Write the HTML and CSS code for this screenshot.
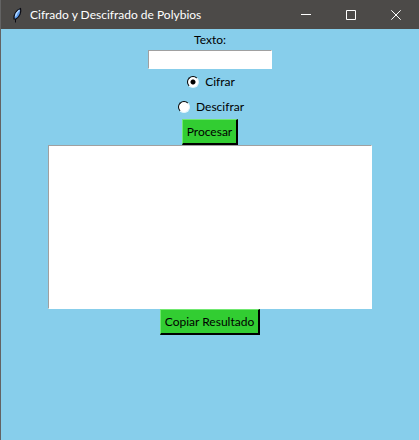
FILE: index.html
```html
<!DOCTYPE html>
<html lang="es">
<head>
<meta charset="utf-8">
<title>Cifrado y Descifrado de Polybios</title>
<link rel="stylesheet" href="styles.css">
</head>
<body>
<div class="window">
  <header class="titlebar">
    <svg class="app-icon" viewBox="0 0 16 16" aria-hidden="true">
      <path d="M5 12C4.500 8 7 3 11.500 1.500C12.500 5 11 9.500 7 12Z" fill="#5b9bea" stroke="#0b0b12" stroke-width="1.200"/>
      <path d="M6.500 9.500C7 6.500 8.500 4.500 10.500 3" fill="none" stroke="#b4d6ff" stroke-width="1.500"/>
      <path d="M6.500 15.500V12" fill="none" stroke="#0b0b12"/>
    </svg>
    <h1 class="title">Cifrado y Descifrado de Polybios</h1>
    <div class="caption-buttons">
      <button class="caption" type="button" aria-label="Minimizar"><svg viewBox="0 0 10 10"><path d="M0 4.500H10"/></svg></button>
      <button class="caption" type="button" aria-label="Maximizar"><svg viewBox="0 0 10 10"><path d="M.5.5H9.500V9.500H.5Z"/></svg></button>
      <button class="caption" type="button" aria-label="Cerrar"><svg viewBox="0 0 10 10"><path d="M.3.3L9.700 9.700M9.700.3L.3 9.700"/></svg></button>
    </div>
  </header>
  <form class="content">
    <label class="label" for="texto">Texto:</label>
    <input class="entry" id="texto" type="text">
    <label class="option"><input type="radio" name="modo" checked>Cifrar</label>
    <label class="option"><input type="radio" name="modo">Descifrar</label>
    <button class="action" type="button">Procesar</button>
    <textarea class="result" aria-label="Resultado"></textarea>
    <button class="action" type="button">Copiar Resultado</button>
  </form>
</div>
</body>
</html>
```
FILE: styles.css
```css
* {
  box-sizing: border-box;
}

body {
  margin: 0;
  font-family: Lato, "Open Sans", sans-serif;
  font-size: 12px;
  color: #000;
}

button,
input,
textarea {
  font: inherit;
  margin: 0;
}

.window {
  display: flex;
  flex-direction: column;
  min-height: 100vh;
  border-left: 1px solid #636363;
  background: #87ceeb;
}

.titlebar {
  display: flex;
  align-items: center;
  height: 29px;
  padding-left: 8px;
  background: #4c4a48;
  color: #fff;
}

.app-icon {
  width: 16px;
  height: 16px;
  margin-right: 5px;
}

.title {
  flex: 1;
  margin: 0;
  font-size: 12px;
  font-weight: normal;
  line-height: 16px;
  white-space: nowrap;
}

.caption-buttons {
  display: flex;
}

.caption {
  display: flex;
  align-items: center;
  justify-content: center;
  width: 45px;
  height: 26px;
  padding: 0 2px 0 0;
  border: 0;
  background: none;
}

.caption svg {
  width: 10px;
  height: 10px;
  fill: none;
  stroke: #fff;
}

.content {
  display: flex;
  flex-direction: column;
  align-items: center;
}

.label {
  line-height: 21px;
}

.entry {
  width: 124px;
  height: 19px;
  padding: 0 2px;
  border: 1px solid #fff;
  border-top-color: #a0a0a0;
  border-left-color: #a0a0a0;
  background: #fff;
  outline: 0;
}

.option {
  display: flex;
  align-items: center;
  gap: 6px;
  height: 25px;
  padding-left: 2px;
}

.option input {
  appearance: none;
  width: 12px;
  height: 12px;
  border: 1px solid #000;
  border-right-color: #e3f6fc;
  border-bottom-color: #e3f6fc;
  border-radius: 50%;
  background: #fff;
}

.option input:checked {
  background: radial-gradient(circle, #000 2px, #fff 3px);
}

.action {
  height: 26px;
  padding: 0 4px;
  border: 2px solid;
  border-color: #70e870 #000 #000 #70e870;
  border-width: 1px 2px 2px 1px;
  background: #32cd32;
  color: #000;
}

.result {
  width: calc(100% - 94px);
  height: 164px;
  padding: 2px;
  border: 1px solid #fff;
  border-top-color: #a0a0a0;
  border-left-color: #a0a0a0;
  background: #fff;
  outline: 0;
  resize: none;
}
```
